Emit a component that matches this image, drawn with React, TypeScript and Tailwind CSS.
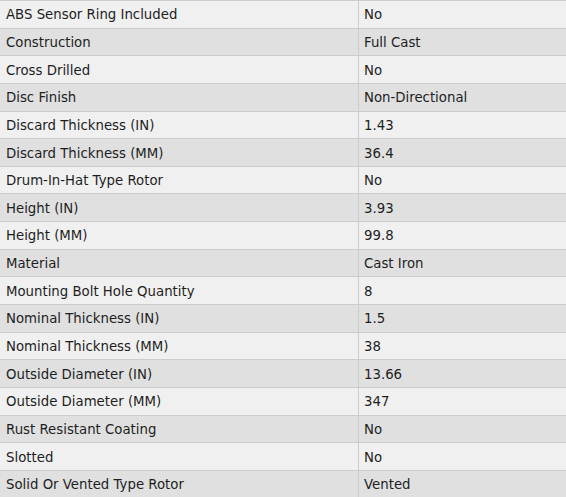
import React from "react";

const rows: [string, string][] = [
  ["ABS Sensor Ring Included", "No"],
  ["Construction", "Full Cast"],
  ["Cross Drilled", "No"],
  ["Disc Finish", "Non-Directional"],
  ["Discard Thickness (IN)", "1.43"],
  ["Discard Thickness (MM)", "36.4"],
  ["Drum-In-Hat Type Rotor", "No"],
  ["Height (IN)", "3.93"],
  ["Height (MM)", "99.8"],
  ["Material", "Cast Iron"],
  ["Mounting Bolt Hole Quantity", "8"],
  ["Nominal Thickness (IN)", "1.5"],
  ["Nominal Thickness (MM)", "38"],
  ["Outside Diameter (IN)", "13.66"],
  ["Outside Diameter (MM)", "347"],
  ["Rust Resistant Coating", "No"],
  ["Slotted", "No"],
  ["Solid Or Vented Type Rotor", "Vented"],
];

export default function App() {
  return (
    <div
      className="w-[566px] h-[497px] overflow-hidden bg-[#f0f0f0] text-[13.3px] text-[#1e1e1e] border-t border-[#cccccc]"
      style={{ fontFamily: '"DejaVu Sans", Verdana, sans-serif' }}
    >
      {rows.map(([k, v], i) => (
        <div
          key={k}
          className={`flex h-[27.65px] border-b border-[#cccccc] ${
            i % 2 === 0 ? "bg-[#f0f0f0]" : "bg-[#e0e0e0]"
          }`}
        >
          <div className="w-[359px] shrink-0 flex items-center pt-[2px] pl-[6px] border-r border-[#cccccc]">
            {k}
          </div>
          <div className="flex-1 flex items-center pt-[2px] pl-[5px]">{v}</div>
        </div>
      ))}
    </div>
  );
}
